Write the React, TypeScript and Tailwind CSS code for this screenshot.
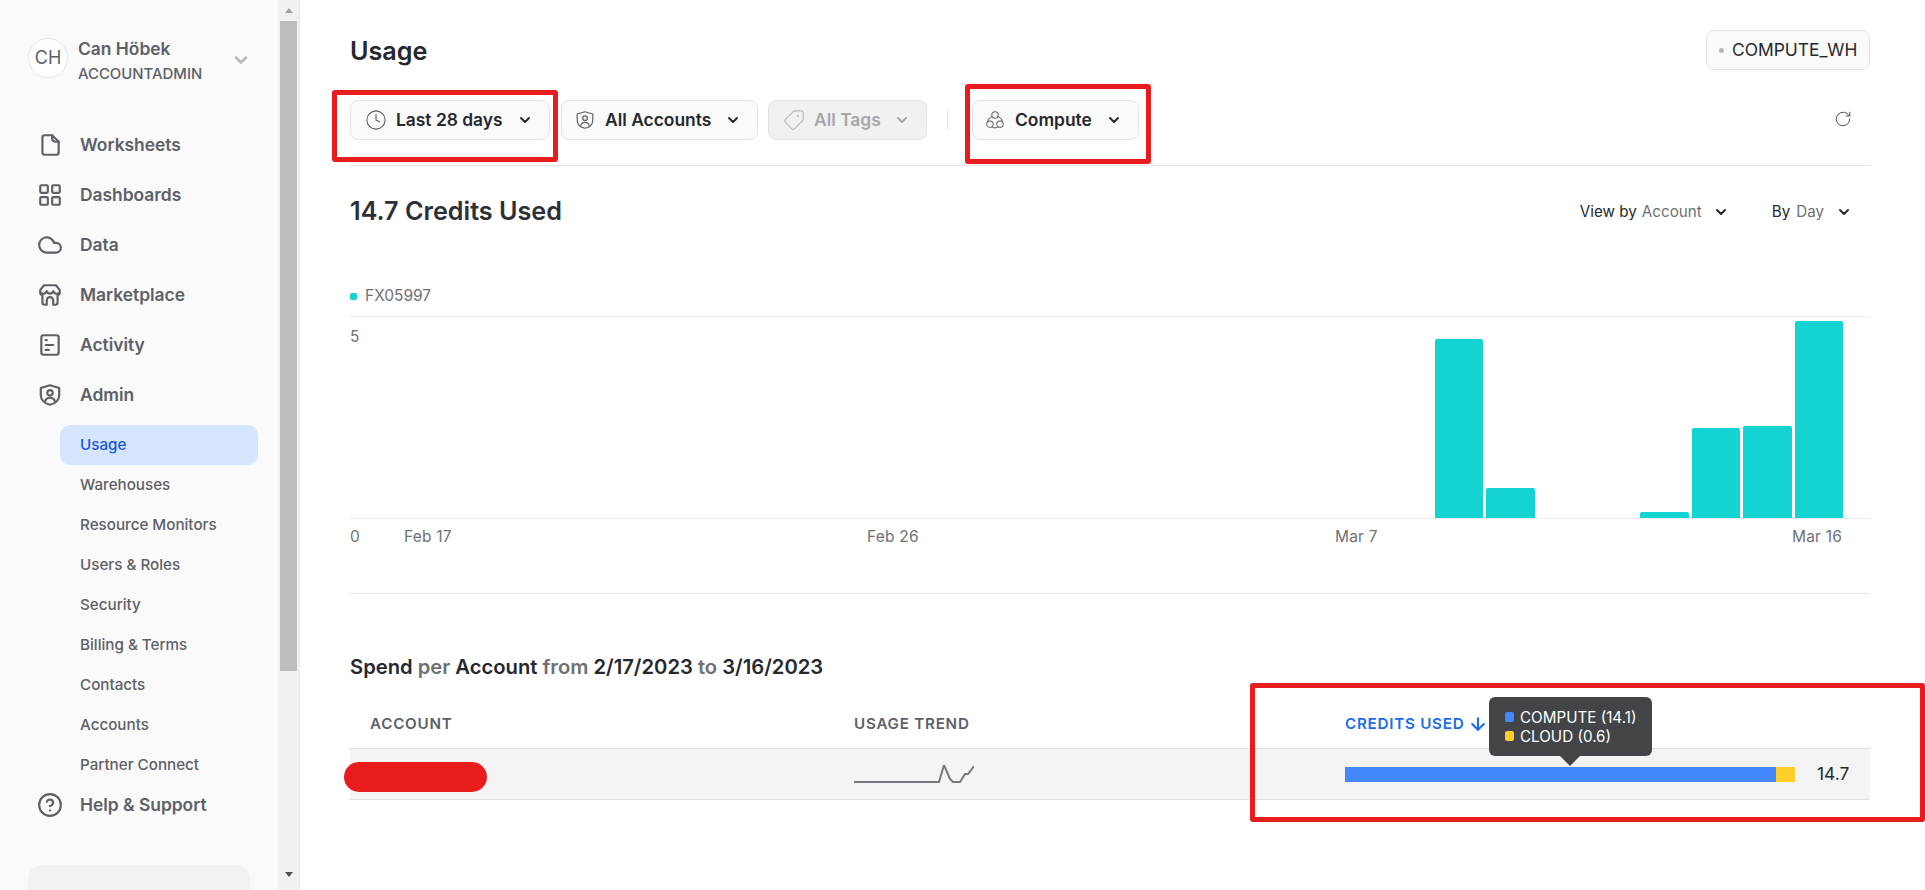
import { ArrowDown, ChevronDown, CircleHelp, Clock, Cloud, LayoutGrid, RotateCw, Tag } from "lucide-react";

const iconProps = { viewBox: "0 0 24 24", fill: "none", stroke: "currentColor", strokeLinecap: "round" as const, strokeLinejoin: "round" as const };

function SheetIcon() {
  return (
    <svg {...iconProps} strokeWidth={2} className="h-[26px] w-[26px]">
      <path d="M7 3h7l6 6v10a2 2 0 0 1-2 2H7a2 2 0 0 1-2-2V5a2 2 0 0 1 2-2z" />
      <path d="M14 3v3a3 3 0 0 0 3 3h3" />
    </svg>
  );
}

function StoreIcon() {
  return (
    <svg {...iconProps} strokeWidth={2} className="h-[26px] w-[26px]">
      <path d="M6.500 3h11L21 7.500V10a2 2 0 0 1-2 1.800V19a2 2 0 0 1-2 2h-2v-4a3 3 0 0 0-6 0v4H7a2 2 0 0 1-2-2v-7.200A2 2 0 0 1 3 10V7.500z" />
      <path d="M3 10c2.500 1.500 5 1 6-1.500 1 3 5 3 6 0 1 2.500 3.500 3 6 1.500" />
    </svg>
  );
}

function ActivityIcon() {
  return (
    <svg {...iconProps} strokeWidth={2} className="h-[26px] w-[26px]">
      <rect x="4" y="3" width="16" height="18" rx="2" />
      <path d="M8 7.500h1M8 12h7M8 16.500h3" />
    </svg>
  );
}

function ShieldIcon({ small }: { small?: boolean }) {
  return (
    <svg {...iconProps} strokeWidth={small ? 1.3 : 2} className={small ? "h-[22px] w-[22px]" : "h-[26px] w-[26px]"}>
      <path d="M12 3l8.500 2.500v6.500c0 4.500-3.500 8-8.500 9-5-1-8.500-4.500-8.500-9V5.500z" />
      <circle cx="12" cy="10" r="2.500" />
      <path d="M7.500 18c.5-2.500 2-3.500 4.500-3.500s4 1 4.500 3.500" />
    </svg>
  );
}

function ComputeIcon() {
  return (
    <svg {...iconProps} strokeWidth={1.1} className="h-[22px] w-[22px]">
      <circle cx="12" cy="6.500" r="3.500" />
      <circle cx="6.500" cy="16.500" r="3.500" />
      <circle cx="17.500" cy="16.500" r="3.500" />
      <path d="M8.800 8C6 9.500 4.500 11 4 13.500M15.200 8c2.800 1.500 4.300 3 4.800 5.500M9.500 20c1.500.7 3.500.7 5 0" />
    </svg>
  );
}

function NavItem({ icon, label }: { icon: React.ReactNode; label: string }) {
  return (
    <div className="flex h-[50px] items-center gap-[17px] pl-[37px] text-[17.400px] font-semibold text-[#5d6068]">
      {icon}
      {label}
    </div>
  );
}

function FilterButton({ icon, label, disabled, className }: { icon: React.ReactNode; label: string; disabled?: boolean; className: string }) {
  return (
    <div
      className={`flex h-[40px] items-center rounded-[8px] border border-[#e3e4e6] text-[17.400px] font-semibold ${
        disabled ? "bg-[#f1f1f2] text-[#a5a7ac]" : "bg-[#fafafa] text-[#25282e]"
      } ${className}`}
    >
      <span className={disabled ? "text-[#b5b7bb]" : "text-[#5d6068]"}>{icon}</span>
      <span className="ml-[9px] whitespace-nowrap">{label}</span>
      <ChevronDown className="ml-auto mr-[16px] h-4 w-4" strokeWidth={3} />
    </div>
  );
}

const subItems = ["Warehouses", "Resource Monitors", "Users & Roles", "Security", "Billing & Terms", "Contacts", "Accounts", "Partner Connect"];

// bar heights in px, one slot per day at the end of the range
const bars = [179, 30, 0, 0, 6, 90, 92, 197];

function Sidebar() {
  return (
    <aside className="flex h-full w-[300px] shrink-0 border-r border-[#e6e6e6]">
      <div className="relative w-[278px] shrink-0 overflow-hidden bg-[#fafafa]">
        <div className="flex h-[40px] items-start pl-[28px] pt-[38px]">
          <div className="flex h-[40px] w-[40px] shrink-0 items-center justify-center rounded-full border border-[#e3e4e6] bg-white text-lg text-[#5d6068]">CH</div>
          <div className="ml-[10px] flex w-[140px] shrink-0 flex-col pt-[1px]">
            <span className="text-[17.400px] font-semibold leading-[20px] text-[#5d6068]">Can Höbek</span>
            <span className="mt-[5px] text-[14.900px] font-medium leading-[20px] text-[#5d6068]">ACCOUNTADMIN</span>
          </div>
          <ChevronDown className="ml-[13px] mt-[12px] h-5 w-5 shrink-0 text-[#b8b9bc]" strokeWidth={3} />
        </div>
        <nav className="mt-[80px] flex flex-col">
          <NavItem icon={<SheetIcon />} label="Worksheets" />
          <NavItem icon={<LayoutGrid className="h-[26px] w-[26px]" strokeWidth={2} />} label="Dashboards" />
          <NavItem icon={<Cloud className="h-[26px] w-[26px]" strokeWidth={2} />} label="Data" />
          <NavItem icon={<StoreIcon />} label="Marketplace" />
          <NavItem icon={<ActivityIcon />} label="Activity" />
          <NavItem icon={<ShieldIcon />} label="Admin" />
          <div className="flex flex-col pl-[60px] pr-[20px] pt-[5px] text-[15.200px] font-medium text-[#5d6068]">
            <div className="flex h-[40px] items-center rounded-[10px] bg-[#d5e5fd] pl-[20px] text-[#1a56db]">Usage</div>
            {subItems.map((item) => (
              <div key={item} className="flex h-[40px] items-center pl-[20px]">
                {item}
              </div>
            ))}
          </div>
          <div className="flex h-[40px] items-center gap-[17px] pl-[37px] text-[17.400px] font-semibold text-[#5d6068]">
            <CircleHelp className="h-[26px] w-[26px]" strokeWidth={2} />
            Help &amp; Support
          </div>
        </nav>
        <div className="ml-[28px] mt-[40px] h-[80px] w-[222px] rounded-[14px] bg-[#f2f2f2]" />
      </div>
      <div className="flex w-[21px] shrink-0 flex-col items-center bg-[#f1f1f1]">
        <div className="mt-[8px] h-0 w-0 border-x-[4.500px] border-b-[5px] border-x-transparent border-b-[#a3a3a3]" />
        <div className="ml-[-1px] mt-[8px] h-[650px] w-[17px] bg-[#bdbdbd]" />
        <div className="mt-[201px] h-0 w-0 border-x-[4.500px] border-t-[5px] border-x-transparent border-t-[#505050]" />
      </div>
    </aside>
  );
}

function Chart() {
  return (
    <div className="flex flex-col">
      <div className="flex h-[20px] items-center text-[15.500px] text-[#6e7076]">
        <span className="h-[7px] w-[7px] rounded-[2px] bg-[#13d3d3]" />
        <span className="ml-[8px]">FX05997</span>
      </div>
      <div className="mt-[10px] flex h-[203px] flex-col border-y border-[#eeeeef]">
        <div className="flex h-full items-start">
          <span className="mt-[8px] text-[15.500px] text-[#6e7076]">5</span>
          <div className="flex h-full flex-1 items-end justify-end gap-[3px] pr-[27px]">
            {bars.map((height, i) => (
              <div key={i} className="w-[48.400px] rounded-t-[2px] bg-[#13d3d3]" style={{ height }} />
            ))}
          </div>
        </div>
      </div>
      <div className="mt-[8px] flex h-[20px] items-center text-[15.500px] tracking-[0.2px] text-[#6e7076]">
        <span className="w-[54px]">0</span>
        <span className="w-[463px]">Feb 17</span>
        <span className="w-[468px]">Feb 26</span>
        <span className="w-[457px]">Mar 7</span>
        <span>Mar 16</span>
      </div>
    </div>
  );
}

function SpendTable() {
  return (
    <div className="flex flex-col">
      <h2 className="text-[20.200px] font-semibold leading-[24px] text-[#25282e]">
        Spend <span className="text-[#6e7076]">per</span> Account <span className="text-[#6e7076]">from</span> 2/17/2023 <span className="text-[#6e7076]">to</span> 3/16/2023
      </h2>
      <div className="mt-[34px] flex h-[35px] items-start text-[15.200px] font-semibold tracking-[0.75px] text-[#5d6068]">
        <span className="ml-[20px] w-[484px]">ACCOUNT</span>
        <span className="w-[491px]">USAGE TREND</span>
        <span className="flex items-center text-[#1a6ce7]">
          CREDITS USED
          <ArrowDown className="ml-[4px] h-[20px] w-[20px]" strokeWidth={2.5} />
        </span>
      </div>
      <div className="relative flex h-[52px] items-center border-y border-[#e0e0e0] bg-[#f4f4f4]">
        <div className="absolute left-[-6px] top-[13px] h-[30px] w-[143px] rounded-full bg-[#e81c1c]" />
        <svg viewBox="0 0 120 18" fill="none" stroke="#77787d" strokeWidth={2} className="ml-[504px] mt-[-1px] h-[18px] w-[120px]">
          <path d="M0 17H85L90 0L96 14L99 17H106L111 9H114L120 1" />
        </svg>
        <div className="ml-[371px] flex h-[15px] w-[450px] shrink-0">
          <div className="h-full w-[431px] bg-[#4389fd]" />
          <div className="h-full flex-1 bg-[#ffce2b]" />
        </div>
        <span className="ml-[22px] text-[17.400px] text-[#25282e]">14.7</span>
        <div className="absolute left-[1139px] top-[-52px] flex h-[59px] w-[163px] flex-col justify-center rounded-[6px] bg-[#424448] pl-[16px] text-[15.200px] leading-[19px] text-white">
          <div className="flex items-center gap-[6px]">
            <span className="h-[10px] w-[9px] rounded-[2px] bg-[#4389fd]" />
            COMPUTE (14.1)
          </div>
          <div className="flex items-center gap-[6px]">
            <span className="h-[10px] w-[9px] rounded-[2px] bg-[#ffce2b]" />
            CLOUD (0.6)
          </div>
          <div className="absolute left-[71px] top-[59px] h-0 w-0 border-x-[10px] border-t-[10px] border-x-transparent border-t-[#424448]" />
        </div>
      </div>
    </div>
  );
}

export default function App() {
  return (
    <div className="relative flex h-[890px] w-[1925px] overflow-hidden bg-white font-['Inter',sans-serif]">
      <Sidebar />
      <main className="ml-[50px] flex h-full w-[1520px] flex-col">
        <div className="flex h-[100px] items-start justify-between pt-[30px]">
          <h1 className="mt-[6px] text-[25.200px] font-semibold leading-[30px] text-[#25282e]">Usage</h1>
          <div className="flex h-[40px] w-[164px] items-center rounded-[8px] border border-[#e3e4e6] bg-[#fafafa] pl-[12px] text-[17.400px] text-[#25282e]">
            <span className="h-[5px] w-[5px] rounded-full bg-[#b5b7bb]" />
            <span className="ml-[8px] whitespace-nowrap">COMPUTE_WH</span>
          </div>
        </div>
        <div className="flex h-[66px] items-start border-b border-[#e3e4e6]">
          <FilterButton icon={<Clock className="h-[22px] w-[22px]" strokeWidth={1.200} />} label="Last 28 days" className="w-[200px] pl-[14px]" />
          <FilterButton icon={<ShieldIcon small />} label="All Accounts" className="ml-[11px] w-[197px] pl-[12px]" />
          <FilterButton icon={<Tag className="h-[22px] w-[22px] -scale-x-100" strokeWidth={1.200} />} label="All Tags" disabled className="ml-[10px] w-[159px] pl-[14px]" />
          <div className="ml-[20px] mt-[9px] h-[21px] w-px bg-[#e3e4e6]" />
          <FilterButton icon={<ComputeIcon />} label="Compute" className="ml-[24px] w-[167px] pl-[11px]" />
          <RotateCw className="ml-auto mr-[18px] mt-[10px] h-[18px] w-[18px] text-[#4a4d55]" strokeWidth={1.300} />
        </div>
        <div className="mt-[31px] flex h-[30px] items-center justify-between">
          <h2 className="text-[25.200px] font-semibold text-[#2d3036]">14.7 Credits Used</h2>
          <div className="flex items-center text-[15.200px] text-[#25282e]">
            <span>View by</span>
            <span className="ml-[5px] text-[#6e7076]">Account</span>
            <ChevronDown className="ml-[11px] h-4 w-4" strokeWidth={3} />
            <span className="ml-[43px]">By</span>
            <span className="ml-[6px] text-[#6e7076]">Day</span>
            <ChevronDown className="ml-[12px] mr-[18px] h-4 w-4" strokeWidth={3} />
          </div>
        </div>
        <div className="mt-[59px]">
          <Chart />
        </div>
        <div className="mt-[46px] border-t border-[#e3e4e6] pt-[61px]">
          <SpendTable />
        </div>
      </main>
      {/* red marker boxes drawn over the screenshot */}
      <div className="absolute left-[332px] top-[90px] h-[72px] w-[226px] rounded-[3px] border-[5px] border-[#e81c1c]" />
      <div className="absolute left-[965px] top-[84px] h-[80px] w-[186px] rounded-[3px] border-[5px] border-[#e81c1c]" />
      <div className="absolute left-[1250px] top-[683px] h-[139px] w-[675px] rounded-[3px] border-[5px] border-[#e81c1c]" />
    </div>
  );
}
